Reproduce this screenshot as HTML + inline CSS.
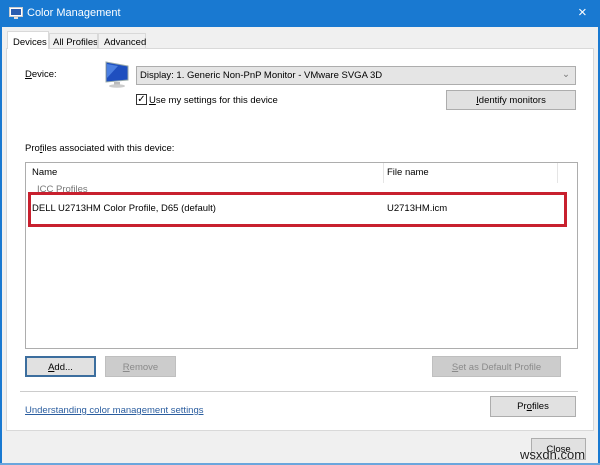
<!DOCTYPE html>
<html><head><meta charset="utf-8"><style>
*{box-sizing:border-box}
body{margin:0;width:600px;height:465px;overflow:hidden;background:#f0f0f0;font-family:"Liberation Sans",sans-serif;font-size:9.5px;color:#000;position:relative}
.a{position:absolute;white-space:nowrap}
.btn{position:absolute;background:#e1e1e1;border:1px solid #adadad;text-align:center;font-size:9.5px;white-space:nowrap}
.dis{background:#cccccc;border-color:#bfbfbf;color:#8a8a8a}
u{text-decoration:underline}
</style></head><body>
<div class="a" style="left:0;top:0;width:600px;height:27px;background:#1979d1"></div>
<div class="a" style="left:0;top:0;width:2px;height:465px;background:#1979d1"></div>
<div class="a" style="left:598px;top:0;width:2px;height:465px;background:#1979d1"></div>
<div class="a" style="left:0;top:463px;width:600px;height:2px;background:#6aa6dd"></div>
<svg class="a" style="left:9px;top:7px" width="14" height="12"><rect x="0.5" y="0.5" width="13" height="9" fill="#fff" stroke="#ccc"/><rect x="2" y="2" width="10" height="6" fill="#2a5db0"/><rect x="5" y="10" width="4" height="2" fill="#ddd"/></svg>
<div class="a" style="left:27px;top:7px;color:#fff;font-size:11px">Color Management</div>
<div class="a" style="left:578px;top:4px;color:#fff;font-size:15px">×</div>
<div class="a" style="left:6px;top:48px;width:588px;height:383px;background:#fff;border:1px solid #d9d9d9"></div>
<div class="a" style="left:7px;top:31px;width:42px;height:18px;background:#fff;border:1px solid #d9d9d9;border-bottom:none;padding:5px 0 0 5px">Devices</div>
<div class="a" style="left:49px;top:33px;width:49px;height:15px;background:#f0f0f0;border:1px solid #d9d9d9;border-bottom:none;padding:3px 0 0 3px;overflow:hidden">All Profiles</div>
<div class="a" style="left:98px;top:33px;width:48px;height:15px;background:#f0f0f0;border:1px solid #d9d9d9;border-bottom:none;padding:3px 0 0 5px">Advanced</div>
<div class="a" style="left:25px;top:69px"><u>D</u>evice:</div>
<svg class="a" style="left:104px;top:60px" width="26" height="28"><polygon points="2,2 24,6 24,20 2,22" fill="#1f4fbf" stroke="#9aa" stroke-width="1"/><polygon points="3,4 14,6 3,18" fill="#4b7fe0"/><rect x="10" y="22" width="6" height="3" fill="#bbb"/><ellipse cx="13" cy="26" rx="8" ry="1.8" fill="#ccc"/></svg>
<div class="a" style="left:136px;top:66px;width:440px;height:19px;background:#e5e5e5;border:1px solid #adadad;padding:3px 0 0 3px">Display: 1. Generic Non-PnP Monitor - VMware SVGA 3D<span style="position:absolute;right:5px;top:2px;color:#777">⌄</span></div>
<div class="a" style="left:136px;top:94px;width:11px;height:11px;border:1px solid #333;background:#fff;font-size:10px;line-height:9px;text-align:center">✓</div>
<div class="a" style="left:149px;top:95px"><u>U</u>se my settings for this device</div>
<div class="btn" style="left:446px;top:90px;width:130px;height:20px;padding-top:4px"><u>I</u>dentify monitors</div>
<div class="a" style="left:25px;top:143px">Pro<u>f</u>iles associated with this device:</div>
<div class="a" style="left:25px;top:162px;width:553px;height:187px;border:1px solid #adadad;background:#fff"></div>
<div class="a" style="left:383px;top:163px;width:1px;height:20px;background:#e5e5e5"></div>
<div class="a" style="left:557px;top:163px;width:1px;height:20px;background:#e5e5e5"></div>
<div class="a" style="left:32px;top:167px">Name</div>
<div class="a" style="left:387px;top:167px">File name</div>
<div class="a" style="left:37px;top:184px;color:#777;height:9px;overflow:hidden">ICC Profiles</div>
<div class="a" style="left:28px;top:192px;width:539px;height:35px;border:3px solid #c8202e"></div>
<div class="a" style="left:32px;top:203px">DELL U2713HM Color Profile, D65 (default)</div>
<div class="a" style="left:387px;top:203px">U2713HM.icm</div>
<div class="btn" style="left:25px;top:356px;width:71px;height:21px;padding-top:4px;border:2px solid #3c6e9e"><u>A</u>dd...</div>
<div class="btn dis" style="left:105px;top:356px;width:71px;height:21px;padding-top:5px"><u>R</u>emove</div>
<div class="btn dis" style="left:432px;top:356px;width:129px;height:21px;padding-top:5px"><u>S</u>et as Default Profile</div>
<div class="a" style="left:20px;top:391px;width:558px;height:1px;background:#ccc"></div>
<div class="a" style="left:25px;top:405px;color:#2a5d9f;text-decoration:underline">Understanding color management settings</div>
<div class="btn" style="left:490px;top:396px;width:86px;height:21px;padding-top:4px">Pr<u>o</u>files</div>
<div class="btn" style="left:531px;top:438px;width:55px;height:22px;padding-top:5px">Close</div>
<div class="a" style="left:520px;top:447px;font-size:13px;color:#222;text-shadow:0 0 2px #fff">wsxdn.com</div>
</body></html>
